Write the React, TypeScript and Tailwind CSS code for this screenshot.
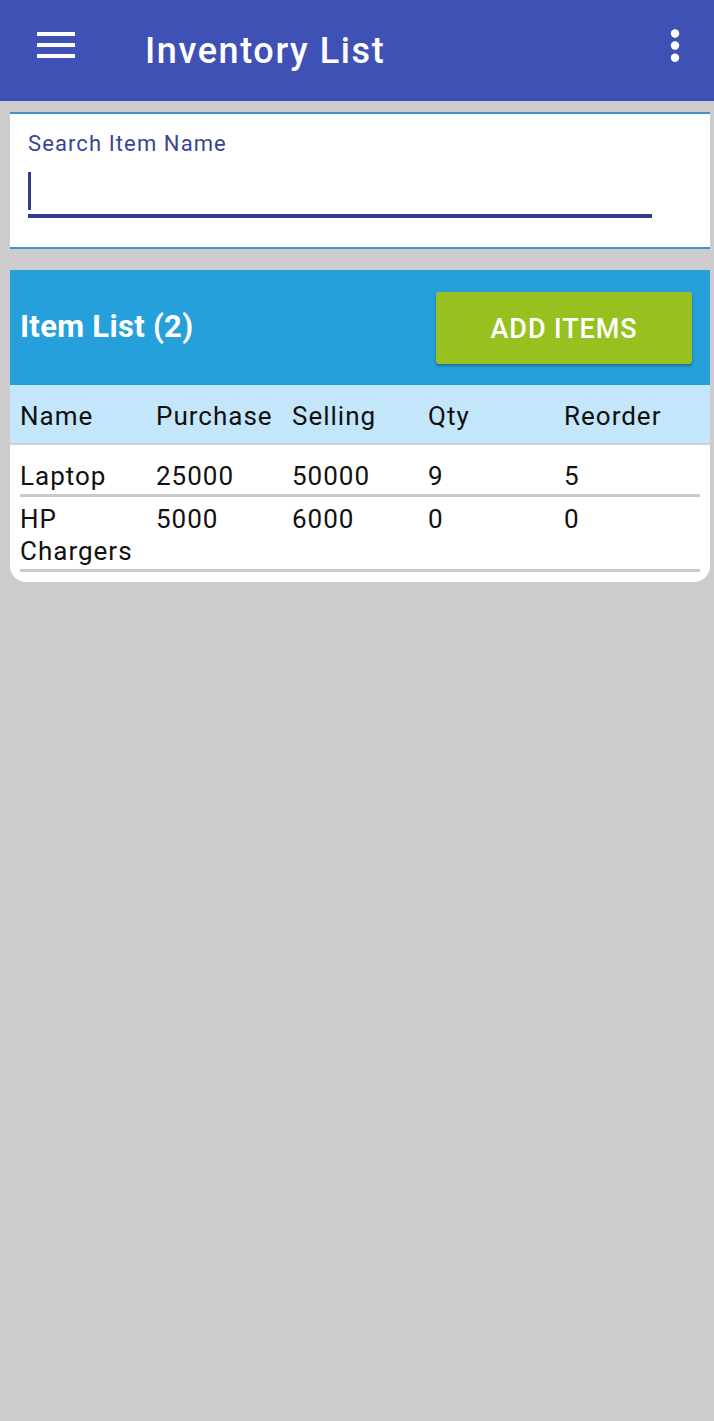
import React from "react";

const rows = [
  { name: ["Laptop"], p: "25000", s: "50000", q: "9", r: "5" },
  { name: ["HP", "Chargers"], p: "5000", s: "6000", q: "0", r: "0" },
];

export default function App() {
  return (
    <div
      className="min-h-[1421px] w-full bg-[#cccccc]"
      style={{ fontFamily: "Roboto, 'Noto Sans', sans-serif" }}
    >
      {/* Top bar */}
      <div className="flex h-[101px] items-center bg-[#3f51b5] pl-[37px] pr-[34px]">
        <svg width="38" height="26" viewBox="0 0 38 26" className="mb-[11px] shrink-0">
          <rect x="0" y="0" width="38" height="4" fill="#fff" />
          <rect x="0" y="11" width="38" height="4" fill="#fff" />
          <rect x="0" y="22" width="38" height="4" fill="#fff" />
        </svg>
        <div className="ml-[70px] flex-1 text-[36px] font-medium leading-none tracking-[1.6px] text-white">
          Inventory List
        </div>
        <svg width="10" height="34" viewBox="0 0 10 34" className="mb-[9px] shrink-0">
          <circle cx="5" cy="4.5" r="4.2" fill="#fff" />
          <circle cx="5" cy="16.5" r="4.2" fill="#fff" />
          <circle cx="5" cy="28.8" r="4.2" fill="#fff" />
        </svg>
      </div>

      {/* Search card */}
      <div className="ml-[10px] mr-[4px] mt-[11px] border-t-2 border-b-2 border-[#3d97c3] bg-white pt-[16px] pb-[29px] pl-[18px] pr-[58px]">
        <div className="text-[22px] leading-[28px] tracking-[1.1px] text-[#3a4594]">
          Search Item Name
        </div>
        <div className="mt-[14px] h-[38px]">
          <div className="h-[38px] w-[3px] bg-[#2f3d8f]" />
        </div>
        <div className="mt-[4px] h-[4px] w-full bg-[#2f3d8f]" />
      </div>

      {/* Item list card */}
      <div className="ml-[10px] mr-[4px] mt-[21px] overflow-hidden rounded-b-[16px] bg-white pb-[10px]">
        <div className="flex h-[115px] items-center justify-between bg-[#26a0da] pl-[10px] pr-[18px]">
          <div className="text-[31px] font-bold tracking-[0.3px] text-white">Item List (2)</div>
          <button className="flex h-[72px] w-[256px] items-center justify-center rounded-[3px] bg-[#97c11f] pt-[4px] text-[27px] font-medium tracking-[0.9px] text-white shadow-[0_2px_3px_rgba(0,0,0,0.3)]">
            ADD ITEMS
          </button>
        </div>
        <div className="grid h-[60px] grid-cols-[136px_136px_136px_136px_1fr] border-b-2 border-[#d0d0d0] bg-[#c4e6fb] pl-[10px] pt-[15px] text-[26px] leading-[32px] tracking-[1px] text-[#111]">
          <div>Name</div>
          <div>Purchase</div>
          <div>Selling</div>
          <div>Qty</div>
          <div>Reorder</div>
        </div>
        <div className="px-[10px] pt-[9px]">
          {rows.map((row, i) => (
            <div
              key={i}
              className="grid grid-cols-[136px_136px_136px_136px_1fr] border-b-[3px] border-[#c9c9c9] pt-[6px] pb-[2px] text-[26px] leading-[32px] tracking-[1px] text-[#111]"
            >
              <div>
                {row.name.map((n) => (
                  <div key={n}>{n}</div>
                ))}
              </div>
              <div>{row.p}</div>
              <div>{row.s}</div>
              <div>{row.q}</div>
              <div>{row.r}</div>
            </div>
          ))}
        </div>
      </div>
    </div>
  );
}
